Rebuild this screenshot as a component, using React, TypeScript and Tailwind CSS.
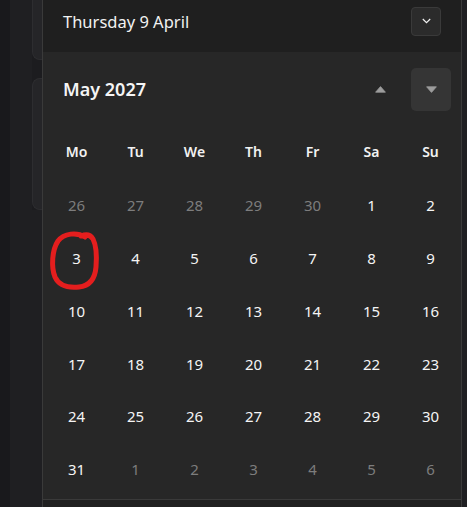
import React from 'react';

const weekdays = ['Mo', 'Tu', 'We', 'Th', 'Fr', 'Sa', 'Su'];

// May 2027 grid, leading/trailing days from neighbouring months are dimmed
const days: { n: number; muted?: boolean }[] = [
  ...[26, 27, 28, 29, 30].map((n) => ({ n, muted: true })),
  ...Array.from({ length: 31 }, (_, i) => ({ n: i + 1 })),
  ...[1, 2, 3, 4, 5, 6].map((n) => ({ n, muted: true })),
];

const Flyout: React.FC = () => {
  return (
    <div className="flex w-[420px] flex-col border-x border-[#3a3a3a]">
      <div className="h-[52px] bg-[#1f1f1f] pl-[20px] pr-[20px]">
        <div className="flex h-[42px] items-center justify-between">
          <span className="pt-[3px] text-[16.5px] text-[#f2f2f2]">Thursday 9 April</span>
          <button className="flex h-[29px] w-[30px] items-center justify-center rounded-[4px] border border-[#3a3a3a] bg-[#2b2b2b]">
            <svg width="9" height="6" viewBox="0 0 9 6" fill="none">
              <path d="M0.8 1 L4.5 4.6 L8.2 1" stroke="#f2f2f2" strokeWidth="1.2" />
            </svg>
          </button>
        </div>
      </div>

      <div className="flex-1 bg-[#272727]">
        <div className="flex h-[74px] items-center justify-between pl-[20px] pr-[10px]">
          <span className="text-[18px] font-semibold text-[#f5f5f5]">May 2027</span>
          <div className="flex gap-[11px]">
            <button className="flex h-[43px] w-[40px] items-center justify-center">
              <svg width="11" height="7" viewBox="0 0 11 7">
                <path d="M5.5 0.6 L10.4 6.2 L0.6 6.2 Z" fill="#9d9d9d" strokeLinejoin="round" stroke="#9d9d9d" strokeWidth="0.8" />
              </svg>
            </button>
            <button className="flex h-[43px] w-[40px] items-center justify-center rounded-[5px] bg-[#353535]">
              <svg width="11" height="7" viewBox="0 0 11 7">
                <path d="M0.6 0.8 L10.4 0.8 L5.5 6.4 Z" fill="#9d9d9d" strokeLinejoin="round" stroke="#9d9d9d" strokeWidth="0.8" />
              </svg>
            </button>
          </div>
        </div>

        <div className="grid h-[50px] grid-cols-[repeat(7,59px)] items-center pl-[4px]">
          {weekdays.map((d) => (
            <span key={d} className="text-center text-[14px] font-semibold text-[#f2f2f2]">
              {d}
            </span>
          ))}
        </div>

        <div className="mt-[3px] grid grid-cols-[repeat(7,59px)] grid-rows-[repeat(6,52.8px)] pl-[4px]">
          {days.map((d, i) => (
            <span
              key={i}
              className={`flex items-center justify-center text-[15px] ${d.muted ? 'text-[#7d7d7d]' : 'text-[#f5f5f5]'}`}
            >
              {d.n}
            </span>
          ))}
        </div>
      </div>

      <div className="h-[8px] border-t border-[#3a3a3a] bg-[#202020]" />
    </div>
  );
};

const App: React.FC = () => {
  return (
    <div className="relative flex h-[507px] w-[467px] overflow-hidden bg-[#1c1c1f] font-['Noto_Sans',sans-serif]">
      <div className="w-[10px] bg-[#19191c]" />
      <div className="w-[22px] bg-[#1f1f22]" />
      <div className="flex w-[10px] flex-col">
        <div className="h-[60px] rounded-bl-lg border-b border-l border-[#2d2d30] bg-[#252528]" />
        <div className="mt-[18px] h-[132px] rounded-l-lg border border-r-0 border-[#2d2d30] bg-[#252528]" />
        <div className="flex-1 bg-[#1f1f22]" />
      </div>
      <Flyout />
      <div className="flex-1 bg-[#1f1f22]" />

      {/* red hand-drawn annotation around the 3rd */}
      <svg className="pointer-events-none absolute left-0 top-0" width="467" height="507" viewBox="0 0 467 507" fill="none">
        <path
          d="M85 237 C77 232, 64 233, 58 241 C52 250, 51 267, 55 277 C59 286, 69 288, 79 287 C89 286, 95 279, 96 267 C97 255, 96 245, 93 239 C90 234, 86 234, 81 236"
          stroke="#e41e1e"
          strokeWidth="5"
          strokeLinecap="round"
        />
      </svg>
    </div>
  );
};

export default App;
